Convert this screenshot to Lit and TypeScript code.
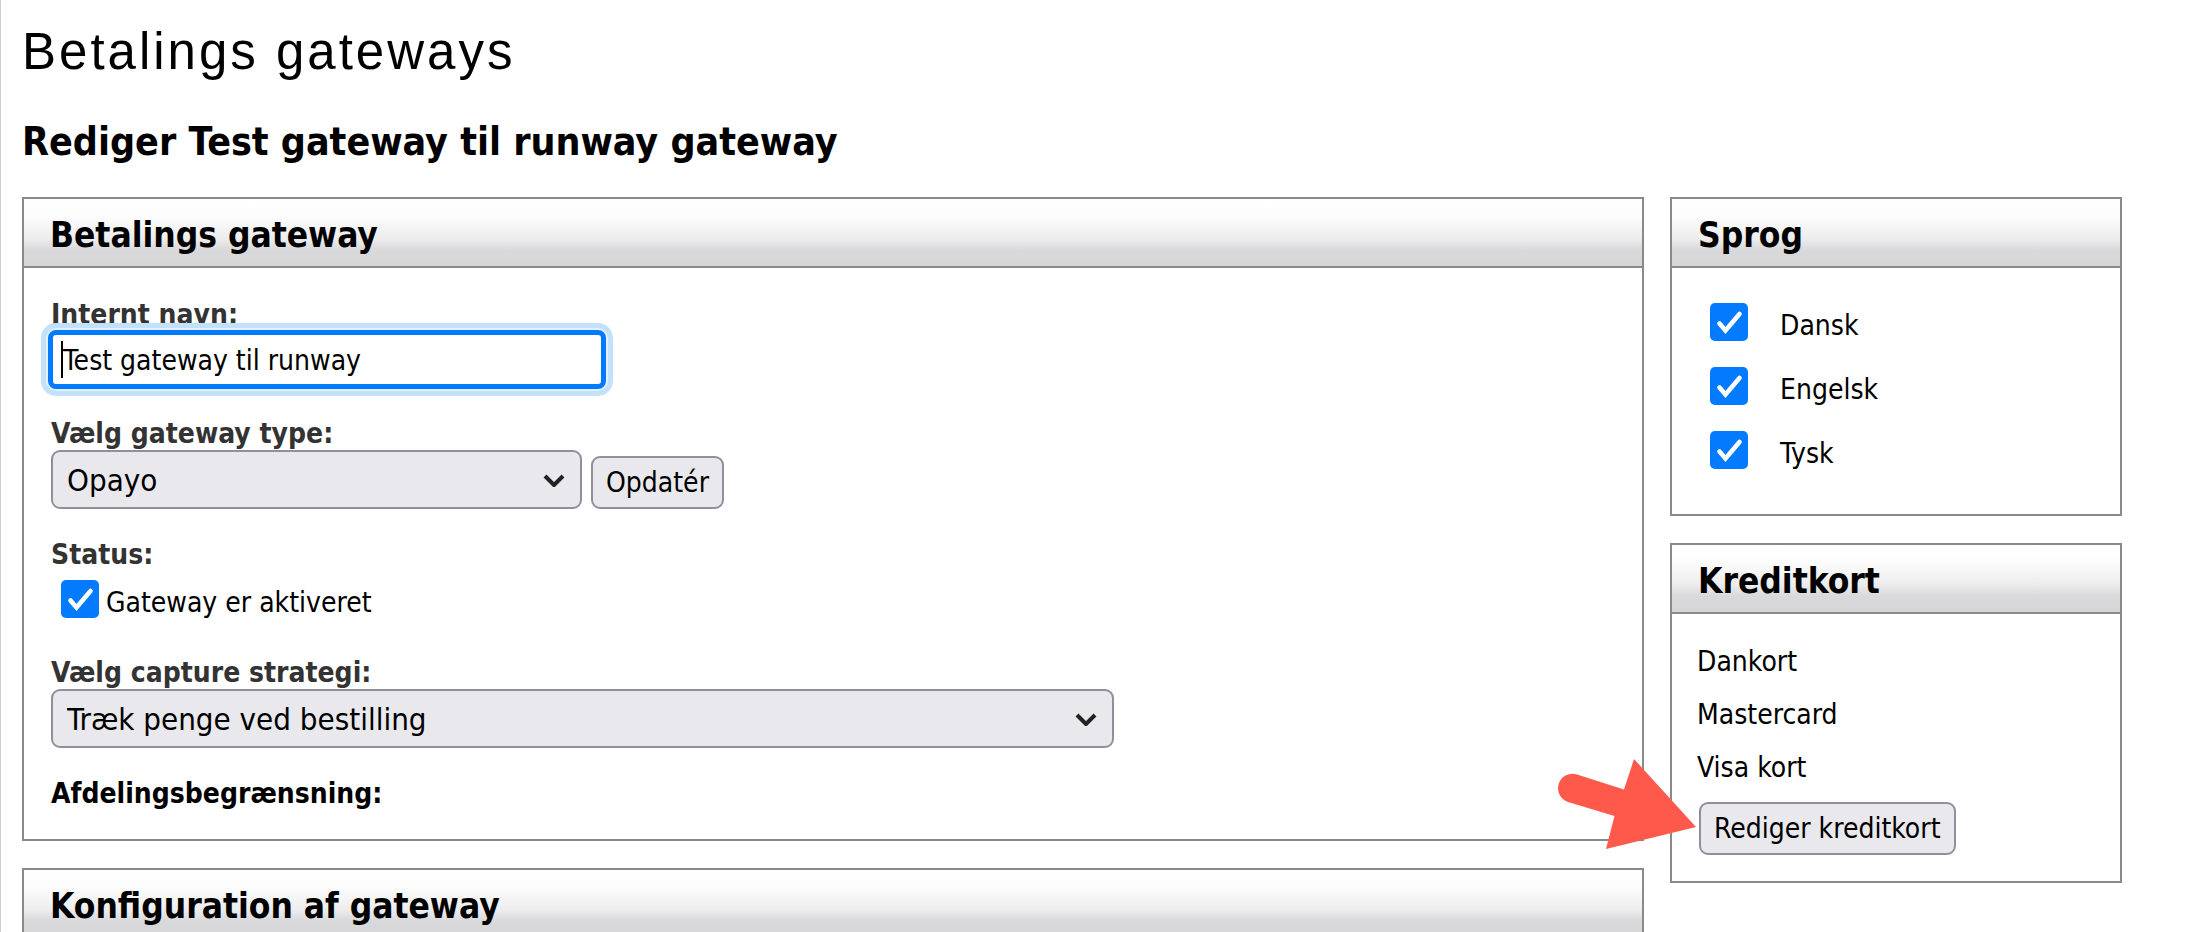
import { LitElement, html, css, type TemplateResult } from "lit";
import { customElement, property, state } from "lit/decorators.js";

const controls = css`
  * {
    box-sizing: border-box;
  }
  .check {
    appearance: none;
    flex: none;
    width: 38px;
    height: 38px;
    margin: 0;
    border: 0;
    border-radius: 5px;
    background: #fff;
    box-shadow: inset 0 0 0 2px #8f8f9d;
  }
  .check:checked {
    box-shadow: none;
    background: #047bff
      url("data:image/svg+xml,%3Csvg xmlns='http://www.w3.org/2000/svg' viewBox='0 0 38 38'%3E%3Cpath d='M9.500 20.500L15.500 27.500L29.500 11' fill='none' stroke='white' stroke-width='4.600' stroke-linecap='round' stroke-linejoin='miter'/%3E%3C/svg%3E")
      center / contain no-repeat;
  }
  .button {
    height: 53px;
    margin: 0 0 0 2px;
    padding: 0 13px;
    border: 2px solid #8f8f9d;
    border-radius: 9px;
    background: #e9e9ed;
    color: #000;
    font: inherit;
    white-space: nowrap;
  }
`;

@customElement("admin-panel")
export class AdminPanel extends LitElement {
  @property() heading = "";

  static styles = css`
    :host {
      display: block;
      border: 2px solid #8a8a8a;
      background: #fff;
    }
    .heading {
      margin: 0;
      padding: 6px 26px 0;
      border-bottom: 2px solid #8a8a8a;
      background: linear-gradient(
        #fff 0%,
        #fdfdfd 25%,
        #ececed 60%,
        #d9d9db 76%,
        #d6d6d8 100%
      );
      font-size: 35px;
      font-weight: bold;
      line-height: 61px;
    }
  `;

  render() {
    return html`
      <h3 class="heading">${this.heading}</h3>
      <slot></slot>
    `;
  }
}

@customElement("app-root")
export class AppRoot extends LitElement {
  @state() private languages = [
    { id: "da", name: "Dansk", active: true },
    { id: "en", name: "Engelsk", active: true },
    { id: "de", name: "Tysk", active: true },
  ];

  @state() private cards = ["Dankort", "Mastercard", "Visa kort"];

  static styles = [
    controls,
    css`
      :host {
        display: block;
        height: 100vh;
        overflow: hidden;
        padding: 22px 90px 0 21px;
        border-left: 1px solid #cfcfcf;
        background: #fff;
        color: #000;
        font: 28px/33px "DejaVu Sans Condensed", "DejaVu Sans", sans-serif;
      }
      .title {
        margin: 0 0 36px;
        font: 51px/60px "Liberation Sans", Arial, sans-serif;
        letter-spacing: 3px;
      }
      .subtitle {
        margin: 0 0 31px;
        font-size: 39px;
        font-weight: bold;
        line-height: 48px;
      }
      .columns {
        display: grid;
        grid-template-columns: minmax(0, 1fr) 452px;
        gap: 26px;
        align-items: start;
      }
      .column {
        display: grid;
        gap: 27px;
      }
      .form {
        display: grid;
        gap: 29px;
        padding: 30px 27px 29px;
      }
      .caption {
        display: block;
        color: #333;
        font-weight: bold;
      }
      .caption.strong {
        color: #000;
      }
      .line {
        display: flex;
        align-items: flex-end;
        gap: 7px;
      }
      .text-wrap {
        position: relative;
        width: 558px;
        margin: -1px -3px;
      }
      .text {
        display: block;
        width: 100%;
        height: 59px;
        padding: 2px 10px 0;
        border: 5px solid #047bff;
        border-radius: 8px;
        outline: none;
        background: #fff;
        box-shadow:
          0 0 0 2px #e3f1fd,
          0 0 0 7px #c3e1fb;
        color: #000;
        font: inherit;
      }
      .caret {
        position: absolute;
        left: 13px;
        top: 11px;
        width: 2px;
        height: 37px;
        background: #000;
      }
      .select-wrap {
        position: relative;
        display: block;
      }
      .select-wrap.narrow {
        width: 531px;
      }
      .select-wrap.wide {
        width: 1063px;
      }
      .select {
        appearance: none;
        display: block;
        width: 100%;
        height: 59px;
        margin: 0;
        padding: 2px 56px 0 14px;
        border: 2px solid #8f8f9d;
        border-radius: 9px;
        background: #e9e9ed;
        color: #000;
        font: inherit;
        font-size: 31px;
      }
      .chevron {
        position: absolute;
        right: 16px;
        top: 23px;
        width: 24px;
        height: 16px;
        pointer-events: none;
      }
      .toggle {
        display: flex;
        align-items: center;
        gap: 7px;
        min-height: 56px;
        padding-left: 10px;
      }
      .toggle-text {
        padding-top: 6px;
      }
      .languages {
        padding: 22px 38px 32px;
      }
      .languages .toggle {
        gap: 32px;
        min-height: 64px;
        padding: 0;
      }
      .cards {
        padding: 21px 25px 26px;
      }
      .card-list {
        margin: 0 0 8px;
        padding: 0;
        list-style: none;
        line-height: 53px;
      }
      .pointed {
        position: relative;
        width: fit-content;
      }
      .pointer {
        position: absolute;
        right: 100%;
        top: -44px;
        width: 140px;
        height: 92px;
        pointer-events: none;
      }
      .config {
        min-height: 120px;
      }
    `,
  ];

  private chevron(): TemplateResult {
    return html`<svg class="chevron" viewBox="0 0 24 16" aria-hidden="true">
      <path
        d="M3 3L12 12L21 3"
        fill="none"
        stroke="#222"
        stroke-width="4"
        stroke-linecap="butt"
        stroke-linejoin="round"
      />
    </svg>`;
  }

  private toggleLanguage(id: string) {
    this.languages = this.languages.map((l) =>
      l.id === id ? { ...l, active: !l.active } : l
    );
  }

  render() {
    return html`
      <h1 class="title">Betalings gateways</h1>
      <h2 class="subtitle">Rediger Test gateway til runway gateway</h2>
      <main class="columns">
        <div class="column">
          <admin-panel heading="Betalings gateway">
            <div class="form">
              <div>
                <label class="caption" for="name">Internt navn:</label>
                <div class="text-wrap">
                  <input class="text" id="name" type="text" value="Test gateway til runway" />
                  <span class="caret"></span>
                </div>
              </div>
              <div>
                <label class="caption" for="type">Vælg gateway type:</label>
                <div class="line">
                  <span class="select-wrap narrow">
                    <select class="select" id="type">
                      <option>Opayo</option>
                    </select>
                    ${this.chevron()}
                  </span>
                  <button class="button" type="button">Opdatér</button>
                </div>
              </div>
              <div>
                <span class="caption">Status:</span>
                <label class="toggle">
                  <input class="check" type="checkbox" checked />
                  <span class="toggle-text">Gateway er aktiveret</span>
                </label>
              </div>
              <div>
                <label class="caption" for="capture">Vælg capture strategi:</label>
                <span class="select-wrap wide">
                  <select class="select" id="capture">
                    <option>Træk penge ved bestilling</option>
                  </select>
                  ${this.chevron()}
                </span>
              </div>
              <span class="caption strong">Afdelingsbegrænsning:</span>
            </div>
          </admin-panel>
          <admin-panel heading="Konfiguration af gateway">
            <div class="config"></div>
          </admin-panel>
        </div>
        <div class="column">
          <admin-panel heading="Sprog">
            <div class="languages">
              ${this.languages.map(
                (l) => html`<label class="toggle">
                  <input
                    class="check"
                    type="checkbox"
                    .checked=${l.active}
                    @change=${() => this.toggleLanguage(l.id)}
                  />
                  <span class="toggle-text">${l.name}</span>
                </label>`
              )}
            </div>
          </admin-panel>
          <admin-panel heading="Kreditkort">
            <div class="cards">
              <ul class="card-list">
                ${this.cards.map((c) => html`<li>${c}</li>`)}
              </ul>
              <div class="pointed">
                <button class="button" type="button">Rediger kreditkort</button>
                <svg class="pointer" viewBox="0 0 140 92" aria-hidden="true">
                  <path
                    d="M20 16.500L67 31.500L77 1L139 69L49 91L57.500 58L11 44A14 14 0 0 1 20 16.500Z"
                    fill="#ff594b"
                  />
                </svg>
              </div>
            </div>
          </admin-panel>
        </div>
      </main>
    `;
  }
}
